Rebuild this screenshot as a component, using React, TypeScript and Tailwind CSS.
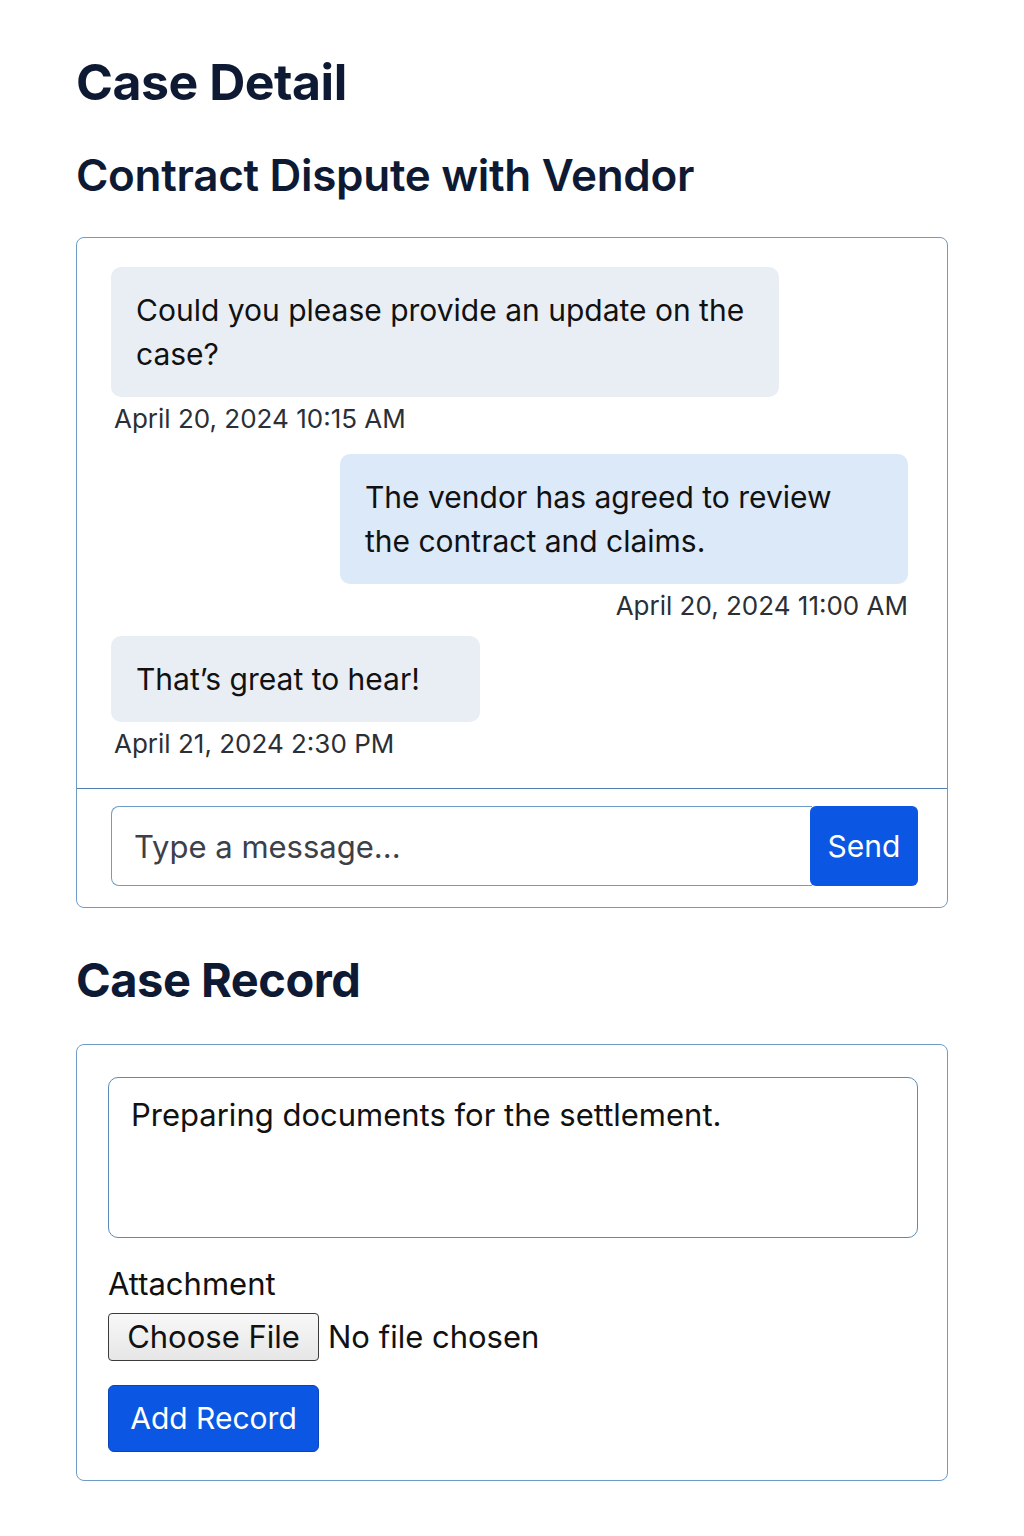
import React from "react";

const font = { fontFamily: "Inter, 'Noto Sans', 'Liberation Sans', sans-serif" };

function Bubble({
  text,
  time,
  mine,
  width,
  className = "",
}: {
  text: React.ReactNode;
  time: string;
  mine?: boolean;
  width: string;
  className?: string;
}) {
  return (
    <div className={(mine ? "flex flex-col items-end " : "flex flex-col items-start ") + className}>
      <div
        className={
          (mine ? "bg-[#dce9f8] " : "bg-[#e9eef5] ") +
          width +
          " rounded-[10px] pl-[25px] pr-[16px] py-[21px] text-[30px] leading-[44px] text-[#111] whitespace-nowrap"
        }
      >
        {text}
      </div>
      <div className={(mine ? "pr-0" : "pl-[3px]") + " mt-[6px] text-[26px] leading-[32px] text-[#2b2f36]"}>{time}</div>
    </div>
  );
}

export default function App() {
  return (
    <div style={font} className="bg-white min-h-[1536px] px-[76px] pt-[52px] text-[#111]">
      <h1 className="text-[50px] leading-[60px] font-bold text-[#0e1a33] tracking-[-0.5px]">Case Detail</h1>
      <h2 className="mt-[36px] text-[44px] leading-[54px] font-semibold text-[#0e1a33] tracking-[-0.3px]">
        Contract Dispute with Vendor
      </h2>

      <div className="mt-[35px] border border-[#6f9cc6] rounded-[8px]">
        <div className="pl-[34px] pr-[39px] pt-[29px] pb-[28px] flex flex-col">
          <Bubble
            width="w-[668px]"
            text={<>Could you please provide an update on the<br />case?</>}
            time="April 20, 2024 10:15 AM"
          />
          <Bubble
            mine
            className="mt-[19px]"
            width="w-[568px]"
            text={<>The vendor has agreed to review<br />the contract and claims.</>}
            time="April 20, 2024 11:00 AM"
          />
          <Bubble
            className="mt-[14px]"
            width="w-[369px]"
            text="That’s great to hear!"
            time="April 21, 2024 2:30 PM"
          />
        </div>
        <div className="border-t border-[#4f7fad] pl-[34px] pr-[29px] pt-[17px] pb-[21px] flex">
          <input
            className="flex-1 h-[80px] border border-[#6f9cc6] border-r-0 rounded-l-[8px] px-[22px] text-[31px] text-[#111] placeholder:text-[#3c4048] outline-none"
            placeholder="Type a message..."
          />
          <button className="w-[108px] h-[80px] bg-[#0b56e3] text-white text-[30px] rounded-[6px] -ml-[2px]">Send</button>
        </div>
      </div>

      <h2 className="mt-[42px] text-[47px] leading-[60px] font-bold text-[#0e1a33] tracking-[-0.5px]">Case Record</h2>

      <div className="mt-[34px] border border-[#6f9cc6] rounded-[8px] pl-[31px] pr-[29px] pt-[32px] pb-[28px]">
        <textarea
          className="block w-full h-[161px] border border-[#5b8bb8] rounded-[10px] px-[22px] py-[17px] text-[31px] leading-[40px] text-[#111] resize-none outline-none"
          defaultValue="Preparing documents for the settlement."
        />
        <div className="mt-[27px] text-[31px] leading-[38px] text-[#111]">Attachment</div>
        <div className="mt-[10px] flex items-center">
          <span className="inline-flex items-center justify-center w-[211px] h-[48px] border border-[#3b3b3b] rounded-[4px] bg-gradient-to-b from-[#f8f8f8] to-[#e6e6e6] text-[31px] text-[#111]">
            Choose File
          </span>
          <span className="ml-[9px] text-[31px] text-[#111]">No file chosen</span>
        </div>
        <button className="mt-[24px] w-[211px] h-[67px] bg-[#0b56e3] text-white text-[30px] rounded-[6px] border border-[#0a45b8]">
          Add Record
        </button>
      </div>
    </div>
  );
}
